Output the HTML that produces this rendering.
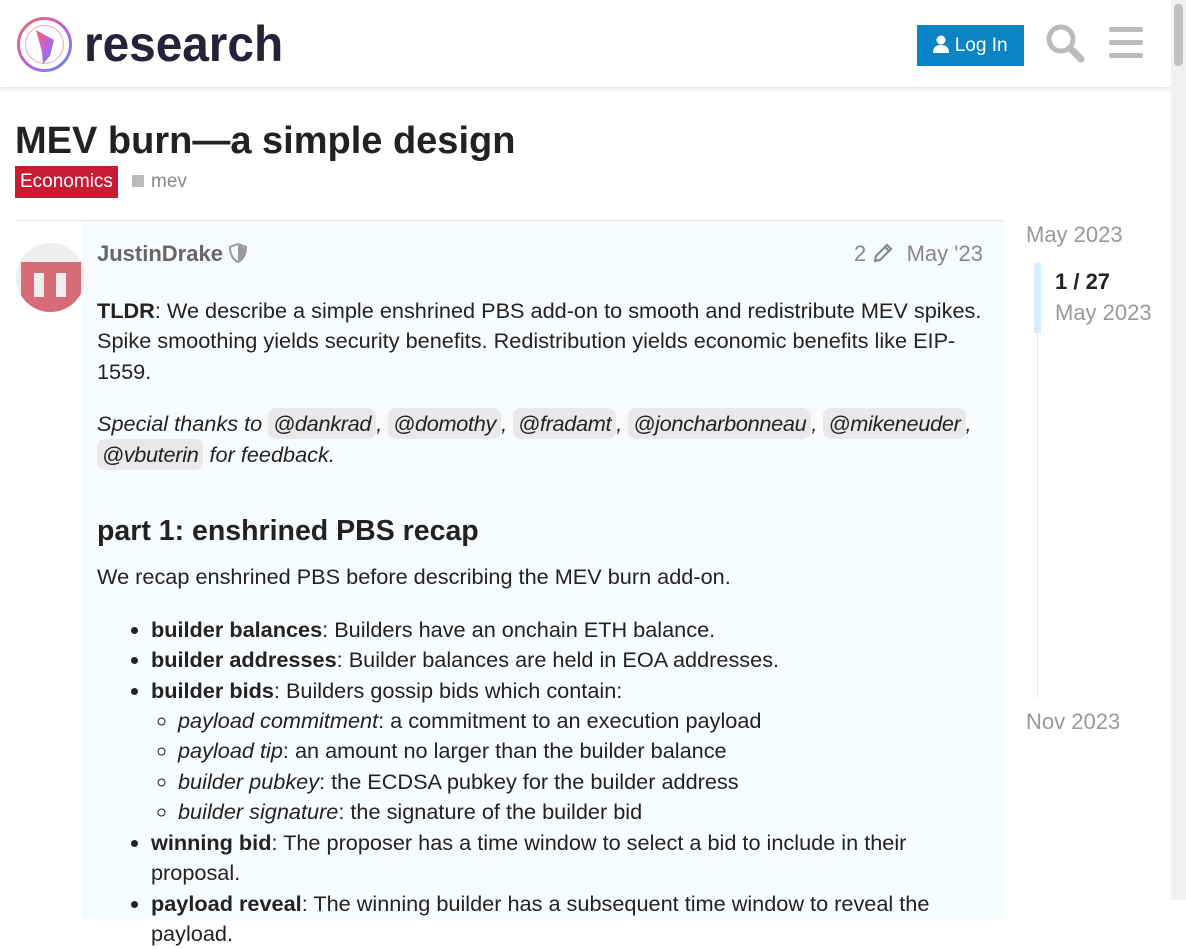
<!DOCTYPE html>
<html><head><style>
*{box-sizing:border-box}
body{margin:0;width:1186px;height:900px;overflow:hidden;font-family:"Liberation Sans",sans-serif;color:#222;background:#fff;position:relative}
.hdr{position:absolute;left:0;top:0;width:1171px;height:87px;background:#fff;box-shadow:0 2px 4px rgba(0,0,0,.12)}
.sb{position:absolute;right:0;top:0;width:15px;height:900px;background:#f1f1f1}
.sb div{position:absolute;left:3px;top:4px;width:9px;height:62px;background:#c1c1c1;border-radius:4px}
.logo{position:absolute;left:84px;top:15px;font-size:50px;font-weight:bold;color:#24233a;transform:scaleX(.955);transform-origin:left}
.login{position:absolute;left:917px;top:25px;width:107px;height:41px;background:#0a84c4;color:#fff;font-size:19px;line-height:41px;text-align:center}
h1{position:absolute;left:15px;top:120px;margin:0;font-size:38px;font-weight:bold}
.cat{position:absolute;left:15px;top:166px;height:32px;background:#c81c35;color:#fff;font-size:19px;line-height:32px;padding:0 5px}
.tag{position:absolute;left:132px;top:171px;font-size:19px;color:#888}
.tag span{display:inline-block;width:12px;height:12px;background:#bbb;margin-right:7px}
.line{position:absolute;left:15px;top:220px;width:989px;height:1px;background:#e5e5e5}
.post{position:absolute;left:81px;top:221px;width:923px;height:700px;background:#f8fbfe}
.av{position:absolute;left:16px;top:243px;width:69px;height:69px;border-radius:50%;background:#eee;overflow:hidden}
.av div{position:absolute;left:5px;top:19px;width:60px;height:50px;background:#d86b78}
.av i{position:absolute;top:30px;width:10px;height:24px;background:#eee}
.name{position:absolute;left:97px;top:241px;font-size:22px;font-weight:bold;color:#666}
.meta{position:absolute;left:854px;top:241px;font-size:22px;color:#888}
.body{position:absolute;left:97px;top:296px;width:895px;font-size:21.7px;line-height:30.4px}
.body p{margin:0 0 22px}
.m{background:#e9e9e9;border-radius:8px;padding:3px 5px;font-style:italic;letter-spacing:-0.3px}
h2{font-size:28.5px;margin:46px 0 16px}
ul{margin:22px 0 0;padding-left:54px}
ul ul{margin:0;padding-left:27px;list-style:circle}
.tl{position:absolute;left:1026px;font-size:22px;color:#999}
.bar{position:absolute;left:1034px;top:263px;width:7px;height:70px;background:#d1eefc}
.vl{position:absolute;left:1037px;top:333px;width:1px;height:365px;background:#e5e5e5}
</style></head><body>
<div class="hdr">
<svg style="position:absolute;left:16px;top:16px" width="57" height="57" viewBox="0 0 57 57"><defs><linearGradient id="g" x1="0" y1="0" x2="1" y2="1"><stop offset="0" stop-color="#f06a5a"/><stop offset=".5" stop-color="#c25fd8"/><stop offset="1" stop-color="#5a8cf0"/></linearGradient></defs><circle cx="28.5" cy="28.5" r="26" fill="none" stroke="url(#g)" stroke-width="3"/><circle cx="28.5" cy="28.5" r="19" fill="none" stroke="#e7a7c0" stroke-width="1"/><path d="M20 14 L38 24 L34 40 L27 48 L26 36 Z" fill="url(#g)"/></svg>
<div class="logo">research</div>
<div class="login"><svg width="16" height="18" viewBox="0 0 16 18" style="vertical-align:-2px"><circle cx="8" cy="5" r="4.5" fill="#fff"/><path d="M0 18 Q0 10 8 10 Q16 10 16 18 Z" fill="#fff"/></svg> Log In</div>
<svg style="position:absolute;left:1045px;top:23px" width="40" height="40" viewBox="0 0 40 40"><circle cx="16" cy="16" r="12" fill="none" stroke="#bbb" stroke-width="5"/><path d="M25 25 L36 36" stroke="#bbb" stroke-width="7" stroke-linecap="round"/></svg>
<div style="position:absolute;left:1109px;top:27px;width:34px;height:5px;background:#bbb;border-radius:2px"></div>
<div style="position:absolute;left:1109px;top:40px;width:34px;height:5px;background:#bbb;border-radius:2px"></div>
<div style="position:absolute;left:1109px;top:53px;width:34px;height:5px;background:#bbb;border-radius:2px"></div>
</div>
<div class="sb"><div></div></div>
<h1>MEV burn—a simple design</h1>
<div class="cat">Economics</div>
<div class="tag"><span></span>mev</div>
<div class="line"></div>
<div class="post"></div>
<div class="av"><div></div><i style="left:18px"></i><i style="left:40px"></i></div>
<div class="name">JustinDrake <svg width="18" height="20" viewBox="0 0 18 20" style="vertical-align:-2px"><path d="M9 1 L17 4 Q17 15 9 19 Q1 15 1 4 Z" fill="none" stroke="#999" stroke-width="2"/><path d="M9 2 L16 5 Q16 14 9 18 Z" fill="#999"/></svg></div>
<div class="meta">2 <svg width="22" height="22" viewBox="0 0 22 22" style="vertical-align:-3px"><path d="M3 19 L4 14 L15 3 L19 7 L8 18 Z M13 5 L17 9" fill="none" stroke="#888" stroke-width="2.2"/></svg> &nbsp;May '23</div>
<div class="body">
<p><b>TLDR</b>: We describe a simple enshrined PBS add-on to smooth and redistribute MEV spikes. Spike smoothing yields security benefits. Redistribution yields economic benefits like EIP-1559.</p>
<p><i>Special thanks to <span class="m">@dankrad</span>, <span class="m">@domothy</span>, <span class="m">@fradamt</span>, <span class="m">@joncharbonneau</span>, <span class="m">@mikeneuder</span>, <span class="m">@vbuterin</span> for feedback.</i></p>
<h2>part 1: enshrined PBS recap</h2>
<p style="margin:0">We recap enshrined PBS before describing the MEV burn add-on.</p>
<ul>
<li><b>builder balances</b>: Builders have an onchain ETH balance.</li>
<li><b>builder addresses</b>: Builder balances are held in EOA addresses.</li>
<li><b>builder bids</b>: Builders gossip bids which contain:
<ul><li><i>payload commitment</i>: a commitment to an execution payload</li>
<li><i>payload tip</i>: an amount no larger than the builder balance</li>
<li><i>builder pubkey</i>: the ECDSA pubkey for the builder address</li>
<li><i>builder signature</i>: the signature of the builder bid</li></ul></li>
<li><b>winning bid</b>: The proposer has a time window to select a bid to include in their proposal.</li>
<li><b>payload reveal</b>: The winning builder has a subsequent time window to reveal the payload.</li>
</ul>
</div>
<div class="tl" style="top:222px">May 2023</div>
<div class="bar"></div><div class="vl"></div>
<div class="tl" style="left:1055px;top:269px;color:#222;font-weight:bold">1 / 27</div>
<div class="tl" style="left:1055px;top:300px">May 2023</div>
<div class="tl" style="top:709px">Nov 2023</div>
</body></html>
